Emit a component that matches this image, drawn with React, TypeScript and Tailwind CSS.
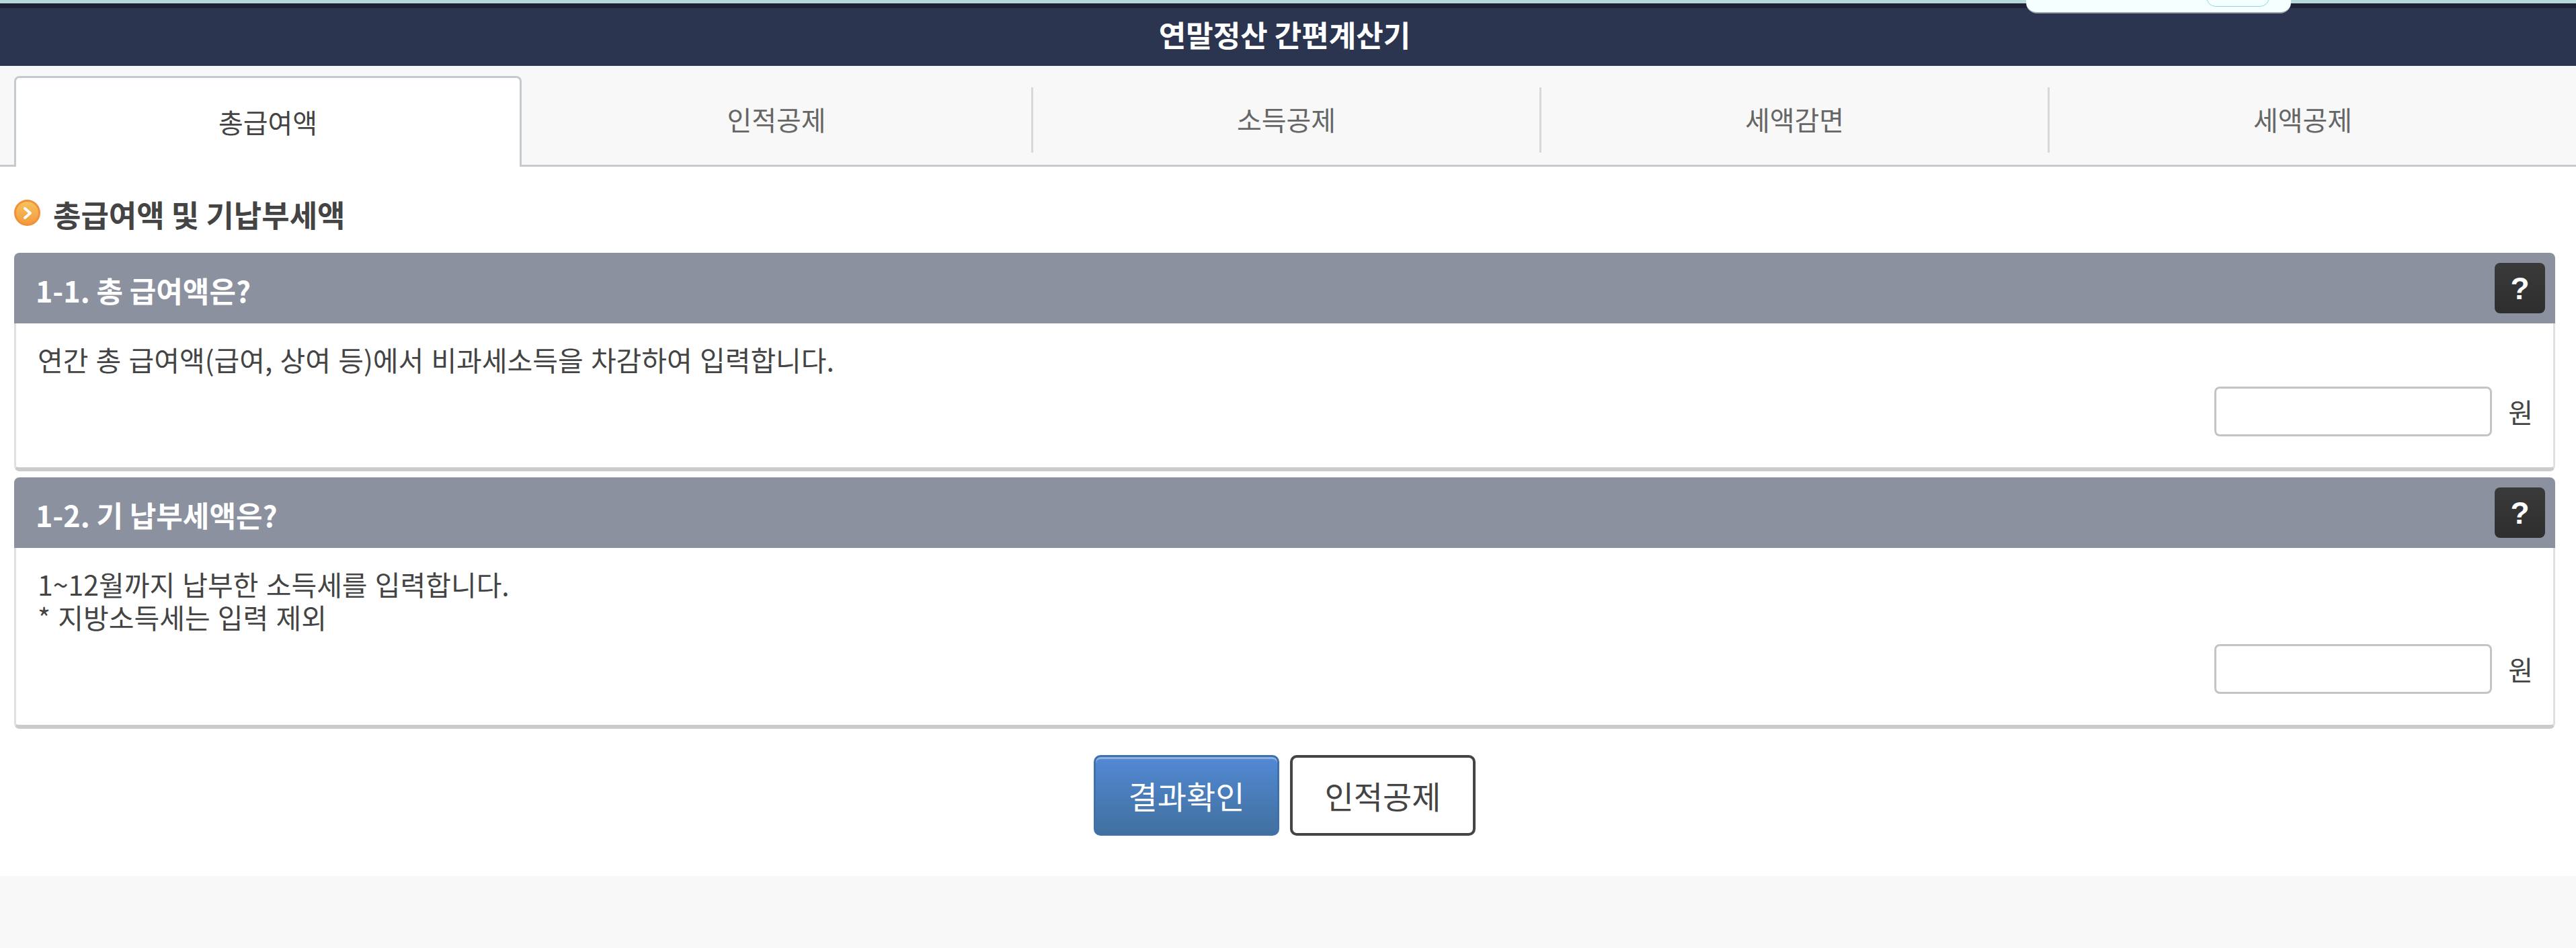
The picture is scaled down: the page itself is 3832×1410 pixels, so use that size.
const tabs = ['총급여액', '인적공제', '소득공제', '세액감면', '세액공제']

const panels = [
    { title: '1-1. 총 급여액은?', lines: ['연간 총 급여액(급여, 상여 등)에서 비과세소득을 차감하여 입력합니다.'] },
    { title: '1-2. 기 납부세액은?', lines: ['1~12월까지 납부한 소득세를 입력합니다.', '* 지방소득세는 입력 제외'] },
]

export default function App() {
    return (
        <div className="min-h-[1410px] bg-[#f8f8f8] font-['Noto_Sans_CJK_KR','Liberation_Sans',sans-serif]">
            <div className="h-[5px] bg-[#b7d9dc]" />
            <div className="relative border-t-[7px] border-[#1e2436] bg-[#2c3550] h-[93px] flex items-center justify-center">
                <h1 className="pr-[10px] text-[44px] font-bold text-white leading-none pb-[8px]">연말정산 간편계산기</h1>
                <div className="absolute left-[3014px] top-[-12px] w-[394px] h-[20px] bg-[#f5ffff] rounded-b-[16px] border-b-2 border-[#9aa4a8] overflow-hidden">
                    <div className="ml-[268px] mt-[-8px] w-[94px] h-[18px] rounded-b-[14px] border border-[#8fd8e0]" />
                </div>
            </div>

            <div className="flex items-end h-[150px] pl-[21px] border-b-[3px] border-[#c5c9d0]">
                {tabs.map((tab, index) =>
                    index === 0 ? (
                        <div key={tab} className="w-[755px] h-[135px] -mb-[3px] bg-white border-x-[3px] border-t-[3px] border-[#c5c9d0] rounded-t-[8px] flex items-center justify-center text-[40px] text-[#444] pb-[2px]">
                            {tab}
                        </div>
                    ) : index === 1 ? (
                        <div key={tab} className="w-[758px] h-[97px] mb-[18px] flex items-center justify-center text-[40px] text-[#666] pb-[4px]">
                            {tab}
                        </div>
                    ) : (
                        <div key={tab} className="w-[756px] h-[97px] mb-[18px] border-l-[3px] border-[#d8d8d8] flex items-center justify-center text-[40px] text-[#666] pb-[4px]">
                            {tab}
                        </div>
                    ),
                )}
            </div>

            <div className="bg-white pl-[21px] pr-[31px] pt-[46px] pb-[60px]">
                <div className="flex items-start gap-[19px] h-[82px]">
                    <div className="mt-[3px] w-[39px] h-[39px] rounded-full border-[3px] border-[#f0913a] bg-gradient-to-b from-[#f6c25c] to-[#f39a3e] flex items-center justify-center shrink-0">
                        <svg width="16" height="20" viewBox="0 0 16 20" fill="none">
                            <path d="M4 3l8 7-8 7" stroke="#fff" strokeWidth="4" strokeLinecap="round" strokeLinejoin="round" />
                        </svg>
                    </div>
                    <h2 className="text-[45px] font-bold text-[#444] leading-[50px]">총급여액 및 기납부세액</h2>
                </div>

                <div className="flex flex-col gap-[9px]">
                    {panels.map((panel) => (
                        <div key={panel.title}>
                            <div className="h-[105px] bg-[#8c919f] rounded-t-[8px] flex items-center justify-between pl-[32px] pr-[15px]">
                                <h3 className="text-[43px] font-bold text-white leading-none pt-[6px]">{panel.title}</h3>
                                <button className="w-[75px] h-[75px] rounded-[8px] bg-gradient-to-b from-[#3a3a3a] to-[#2e2e2e] text-white text-[46px] font-bold font-['Liberation_Sans',sans-serif] leading-none flex items-center justify-center">
                                    ?
                                </button>
                            </div>
                            <div className="bg-white border-x-[3px] border-[#e0e0e0] border-b-[6px] border-b-[#cbcbcb] rounded-b-[8px] pl-[32px] pr-[30px] pt-[29px] pb-[46px]">
                                <div className="text-[41px] leading-[49px] text-[#444] [word-spacing:2px]">
                                    {panel.lines.map((line) => (
                                        <p key={line}>{line}</p>
                                    ))}
                                </div>
                                <div className="mt-[16px] flex items-center justify-end gap-[24px]">
                                    <input className="w-[413px] h-[74px] bg-white rounded-[8px] border-[3px] border-[#c4c4c4]" />
                                    <span className="text-[40px] text-[#444] leading-none">원</span>
                                </div>
                            </div>
                        </div>
                    ))}
                </div>

                <div className="mt-[39px] flex justify-center gap-[16px]">
                    <button className="w-[276px] h-[120px] rounded-[10px] border-[3px] border-[#3f71ae] bg-gradient-to-b from-[#5289d4] to-[#41709f] shadow-[inset_0_3px_0_#8fb0e0] text-white text-[47px]">
                        결과확인
                    </button>
                    <button className="w-[276px] h-[120px] rounded-[10px] border-[4px] border-[#444] bg-white text-[#444] text-[47px]">
                        인적공제
                    </button>
                </div>
            </div>
        </div>
    )
}
